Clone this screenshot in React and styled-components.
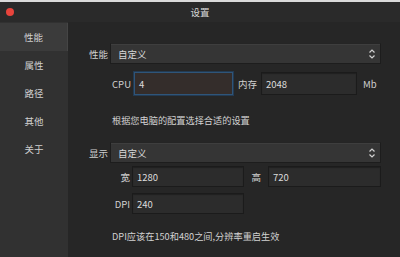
import React from "react";
import styled, { createGlobalStyle } from "styled-components";

const Global = createGlobalStyle`
   html, body { margin: 0; padding: 0; background: #262626; }
   body { font-family: "Noto Sans CJK SC", "Liberation Sans", sans-serif; }
`
const Window = styled.div`
   width: 400px;
   height: 257px;
   display: flex;
   flex-direction: column;
   background: #262626;
   border-top: 2px solid #dadada;
   box-sizing: border-box;
   overflow: hidden;
`
const TitleBar = styled.div`
   height: 20px;
   position: relative;
   display: flex;
   align-items: center;
   justify-content: center;
   background: #2a2a2a;
   color: #d6d6d6;
   font-size: 9.5px;
`
const Dot = styled.span`
   position: absolute;
   left: 6px;
   top: 6px;
   width: 8px;
   height: 8px;
   border-radius: 50%;
   background: #e8443c;
`
const Body = styled.div`
   flex: 1;
   display: flex;
`
const Sidebar = styled.div`
   width: 70px;
   background: #313131;
   display: flex;
   flex-direction: column;
   padding-top: 1px;
`
const NavItem = styled.div`
   height: 28px;
   display: flex;
   align-items: center;
   justify-content: center;
   font-size: 9.5px;
   color: #cfcfcf;
   background: ${props => props.active ? '#3b3b3b' : 'transparent'};
   border-right: ${props => props.active ? '1px solid #454545' : 'none'};
`
const Main = styled.div`
   flex: 1;
   padding: 21px 19px 0 18px;
   display: flex;
   flex-direction: column;
   color: #d0d0d0;
   font-size: 9.5px;
`
const HeadRow = styled.div`
   display: flex;
   align-items: center;
   gap: 2px;
   margin-top: ${props => props.top || 0}px;
`
const HeadLabel = styled.div`
   width: 22px;
   text-align: right;
`
const Select = styled.div`
   flex: 1;
   height: 21px;
   box-sizing: border-box;
   display: flex;
   align-items: center;
   justify-content: space-between;
   padding: 0 4px 0 7px;
   background: #353535;
   border: 1px solid #1d1d1d;
   border-top-color: #252525;
   box-shadow: inset 0 1px 0 #3e3e3e;
   color: #d8d8d8;
`
const SubRow = styled.div`
   display: flex;
   align-items: center;
   margin-left: 24px;
   margin-top: ${props => props.top || 0}px;
`
const SubLabel = styled.div`
   width: ${props => props.w || 20}px;
   text-align: right;
   margin-right: ${props => props.gap || 3}px;
   margin-left: ${props => props.left || 0}px;
`
const Input = styled.div`
   width: ${props => props.w}px;
   height: ${props => props.h || 21}px;
   box-sizing: border-box;
   display: flex;
   align-items: center;
   padding-left: 4px;
   background: ${props => props.focus ? '#342d2b' : '#2c2c2c'};
   border: 1px solid ${props => props.focus ? '#2f5579' : '#1b1b1b'};
   box-shadow: ${props => props.focus ? '0 0 0 1px #233a52' : 'inset 0 1px 1px #202020'};
   color: #dcdcdc;
`
const Unit = styled.div`
   margin-left: 6px;
`
const Hint = styled.div`
   margin-left: 26px;
   margin-top: ${props => props.top || 0}px;
   font-size: 9.2px;
   color: #d2d2d2;
`

const Arrows = () => (
   <svg width="8" height="12" viewBox="0 0 8 12">
      <path d="M1.5 4.5 L4 2 L6.5 4.5 M1.5 7.5 L4 10 L6.5 7.5" fill="none" stroke="#d0d0d0" strokeWidth="1.2" />
   </svg>
)

const nav = ['性能', '属性', '路径', '其他', '关于']

const App = () => {
   return (
      <Window>
         <Global />
         <TitleBar>
            <Dot />
            设置
         </TitleBar>
         <Body>
            <Sidebar>
               {nav.map((n, i) => (
                  <NavItem key={n} active={i === 0}>{n}</NavItem>
               ))}
            </Sidebar>
            <Main>
               <HeadRow>
                  <HeadLabel>性能</HeadLabel>
                  <Select>
                     自定义
                     <Arrows />
                  </Select>
               </HeadRow>
               <SubRow top={8}>
                  <SubLabel w={21} gap={3}>CPU</SubLabel>
                  <Input w={99} h={23} focus>4</Input>
                  <SubLabel w={20} gap={4} left={4}>内存</SubLabel>
                  <Input w={96} h={23}>2048</Input>
                  <Unit>Mb</Unit>
               </SubRow>
               <Hint top={18}>根据您电脑的配置选择合适的设置</Hint>
               <HeadRow top={15}>
                  <HeadLabel>显示</HeadLabel>
                  <Select>
                     自定义
                     <Arrows />
                  </Select>
               </HeadRow>
               <SubRow top={3}>
                  <SubLabel w={20} gap={2}>宽</SubLabel>
                  <Input w={112}>1280</Input>
                  <SubLabel w={12} gap={7} left={5}>高</SubLabel>
                  <Input w={113}>720</Input>
               </SubRow>
               <SubRow top={6}>
                  <SubLabel w={20} gap={2}>DPI</SubLabel>
                  <Input w={112}>240</Input>
               </SubRow>
               <Hint top={15}>DPI应该在150和480之间,分辨率重启生效</Hint>
            </Main>
         </Body>
      </Window>
   )
}
export default App
